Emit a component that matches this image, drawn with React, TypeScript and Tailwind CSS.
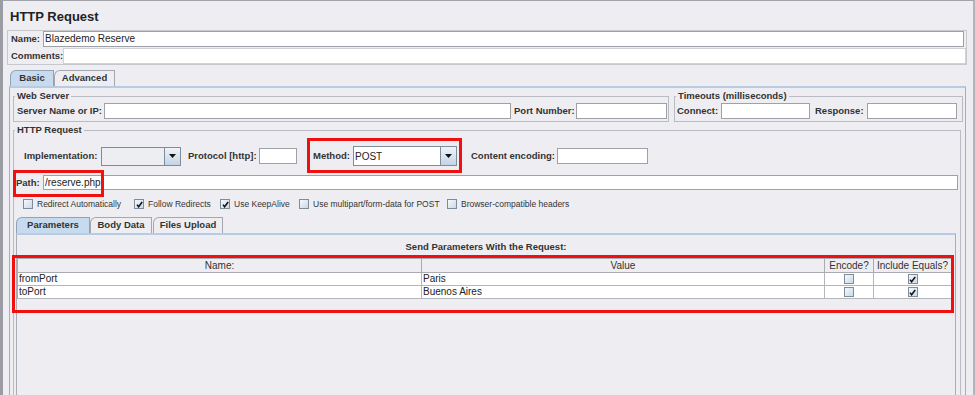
import type { ReactNode } from 'react';

function Label({ children, className = '' }: { children: ReactNode; className?: string }) {
  return (
    <span className={`shrink-0 whitespace-nowrap text-[9.5px] font-bold leading-[12px] text-[#333] ${className}`}>
      {children}
    </span>
  );
}

function Input({ value, className = '' }: { value?: string; className?: string }) {
  return (
    <div
      className={`flex shrink-0 items-center overflow-hidden border border-[#9ea1a8] bg-white px-[1px] text-[10px] leading-[12px] text-[#222] ${className}`}
    >
      {value}
    </div>
  );
}

function Combo({ value, white, className = '' }: { value?: string; white?: boolean; className?: string }) {
  return (
    <div className={`flex shrink-0 border border-[#7f8d9b] ${white ? 'bg-white' : 'bg-[#eceef2]'} ${className}`}>
      <div className="flex flex-1 items-center px-[1px] text-[10px] text-[#222]">{value}</div>
      <div className="flex w-[16px] items-center justify-center border-l border-[#7f8d9b] bg-gradient-to-b from-[#eef3f9] to-[#c3d4e6]">
        <svg width="7" height="4" viewBox="0 0 7 4">
          <path d="M0 0h7L3.5 4z" fill="#111" />
        </svg>
      </div>
    </div>
  );
}

function Check({ checked }: { checked?: boolean }) {
  return (
    <span className="flex h-[10px] w-[10px] shrink-0 items-center justify-center border border-[#7f8d9b] bg-gradient-to-br from-[#f6f9fc] to-[#cbd9e8]">
      {checked ? (
        <svg width="7" height="7" viewBox="0 0 7 7">
          <path d="M1 3.6L2.6 5.8L6.2 1" stroke="#111" strokeWidth="1.5" fill="none" />
        </svg>
      ) : null}
    </span>
  );
}

function CheckItem({ label, checked, className = '' }: { label: string; checked?: boolean; className?: string }) {
  return (
    <div className={`flex shrink-0 items-center gap-[4px] ${className}`}>
      <Check checked={checked} />
      <span className="whitespace-nowrap text-[8.5px] leading-[10px] text-[#333]">{label}</span>
    </div>
  );
}

function Tab({ label, active, className = '' }: { label: string; active?: boolean; className?: string }) {
  return (
    <div
      className={`flex h-[16px] shrink-0 items-center justify-center rounded-tl-[6px] border border-b-0 text-[9.5px] font-bold text-[#333] ${
        active ? 'border-[#8ea3b9] bg-[#c8daee]' : 'border-[#a4a7af] bg-[#eeeef2]'
      } ${className}`}
    >
      {label}
    </div>
  );
}

function Legend({ children }: { children: ReactNode }) {
  return (
    <legend className="ml-[1px] px-[2px] text-[9.5px] font-bold leading-[10px] text-[#333]">{children}</legend>
  );
}

const params = [
  { name: 'fromPort', value: 'Paris' },
  { name: 'toPort', value: 'Buenos Aires' },
];

export default function App() {
  return (
    <div className="relative flex h-[395px] w-[975px] flex-col overflow-hidden border-l-[3px] border-r-2 border-t border-l-[#9a9ba3] border-r-[#b3b4bb] border-t-[#a3a4ab] bg-[#eeeef2] font-['Liberation_Sans',Arial,sans-serif]">
      <h1 className="ml-[7px] mt-[8px] h-[16px] text-[13px] font-bold leading-[16px] text-[#222]">HTTP Request</h1>

      {/* name / comments */}
      <div className="ml-[4px] mt-[5px] w-[960px] border border-[#c6c8ce]">
        <div className="flex h-[16px] items-center pl-[3px]">
          <Label className="w-[32px]">Name:</Label>
          <Input value="Blazedemo Reserve" className="h-[16px] w-[921px]" />
        </div>
        <div className="mt-[1px] flex h-[16px] items-center pl-[3px]">
          <Label className="w-[52px]">Comments:</Label>
          <div className="h-[16px] flex-1 border border-[#d0d2d7] bg-white" />
        </div>
      </div>

      {/* main tabs */}
      <div className="ml-[7px] mt-[6px] flex h-[15px] items-end">
        <Tab label="Basic" active className="h-[15px] w-[44px]" />
        <Tab label="Advanced" className="h-[15px] w-[61px]" />
      </div>
      <div className="ml-[6px] h-[320px] w-[957px] shrink-0 border border-t-2 border-[#a9adb5] border-t-[#b7cce3]">
        <div className="ml-[3px] mt-[3px] flex">
          <fieldset className="w-[656px] border border-[#b9bcc3] pb-[1px]">
            <Legend>Web Server</Legend>
            <div className="mt-[1px] flex h-[18px] items-center pl-[3px]">
              <Label className="w-[87px]">Server Name or IP:</Label>
              <Input className="h-[16px] w-[407px]" />
              <Label className="ml-[3px] w-[62px]">Port Number:</Label>
              <Input className="h-[16px] w-[91px]" />
            </div>
          </fieldset>
          <fieldset className="ml-[5px] w-[289px] border border-[#b9bcc3] pb-[1px]">
            <Legend>Timeouts (milliseconds)</Legend>
            <div className="mt-[1px] flex h-[18px] items-center pl-[2px]">
              <Label className="w-[44px]">Connect:</Label>
              <Input className="h-[16px] w-[89px]" />
              <Label className="ml-[5px] w-[52px]">Response:</Label>
              <Input className="h-[16px] w-[90px]" />
            </div>
          </fieldset>
        </div>

        <fieldset className="ml-[3px] mt-[3px] h-[300px] w-[948px] border border-[#b9bcc3]">
          <Legend>HTTP Request</Legend>
          <div className="mt-[11px] flex h-[20px] items-center pl-[10px]">
            <Label className="w-[77px]">Implementation:</Label>
            <Combo className="h-[19px] w-[80px]" />
            <Label className="ml-[7px] w-[71px]">Protocol [http]:</Label>
            <Input className="h-[16px] w-[38px]" />
            <Label className="ml-[16px] w-[40px]">Method:</Label>
            <Combo value="POST" white className="h-[20px] w-[104px]" />
            <Label className="ml-[14px] w-[86px]">Content encoding:</Label>
            <Input className="h-[16px] w-[91px]" />
          </div>
          <div className="mt-[9px] flex h-[15px] items-center pl-[2px]">
            <Label className="w-[27px]">Path:</Label>
            <Input value="/reserve.php" className="h-[15px] w-[915px]" />
          </div>
          <div className="mt-[9px] flex h-[10px] items-center pl-[9px]">
            <CheckItem label="Redirect Automatically" className="w-[111px]" />
            <CheckItem label="Follow Redirects" checked className="w-[86px]" />
            <CheckItem label="Use KeepAlive" checked className="w-[79px]" />
            <CheckItem label="Use multipart/form-data for POST" className="w-[148px]" />
            <CheckItem label="Browser-compatible headers" />
          </div>

          <div className="mt-[8px] flex h-[16px] items-end pl-[2px]">
            <Tab label="Parameters" active className="w-[74px]" />
            <Tab label="Body Data" className="w-[62px]" />
            <Tab label="Files Upload" className="ml-[1px] w-[70px]" />
          </div>
          <div className="ml-[2px] h-[200px] w-[940px] border border-t-2 border-[#a9adb5] border-t-[#b7cce3]">
            <div className="mt-[6px] h-[12px] text-center text-[9.5px] font-bold leading-[12px] text-[#333]">
              Send Parameters With the Request:
            </div>
            <div className="mt-[5px] w-[934px] border-l border-t border-[#a8abb2] text-[10px] leading-[12px] text-[#333]">
              <div className="grid h-[14px] grid-cols-[404px_403px_49px_78px]">
                {['Name:', 'Value', 'Encode?', 'Include Equals?'].map((h) => (
                  <div key={h} className="flex items-center justify-center border-b border-r border-[#a8abb2] bg-[#eeeef2]">
                    {h}
                  </div>
                ))}
              </div>
              {params.map((p) => (
                <div key={p.name} className="grid h-[13px] grid-cols-[404px_403px_49px_78px] bg-white text-[#222]">
                  <div className="flex items-center border-b border-r border-[#b4b6bc] pl-[1px]">{p.name}</div>
                  <div className="flex items-center border-b border-r border-[#b4b6bc] pl-[1px]">{p.value}</div>
                  <div className="flex items-center justify-center border-b border-r border-[#b4b6bc]">
                    <Check />
                  </div>
                  <div className="flex items-center justify-center border-b border-r border-[#b4b6bc]">
                    <Check checked />
                  </div>
                </div>
              ))}
            </div>
          </div>
        </fieldset>
      </div>

      {/* red annotation boxes drawn over the form */}
      <div className="pointer-events-none absolute left-[304px] top-[137px] h-[35px] w-[155px] border-[3px] border-[#f01010]" />
      <div className="pointer-events-none absolute left-[10px] top-[169px] h-[27px] w-[91px] border-[3px] border-[#f01010]" />
      <div className="pointer-events-none absolute left-[9px] top-[254px] h-[58px] w-[942px] border-[3px] border-[#f01010]" />
    </div>
  );
}
